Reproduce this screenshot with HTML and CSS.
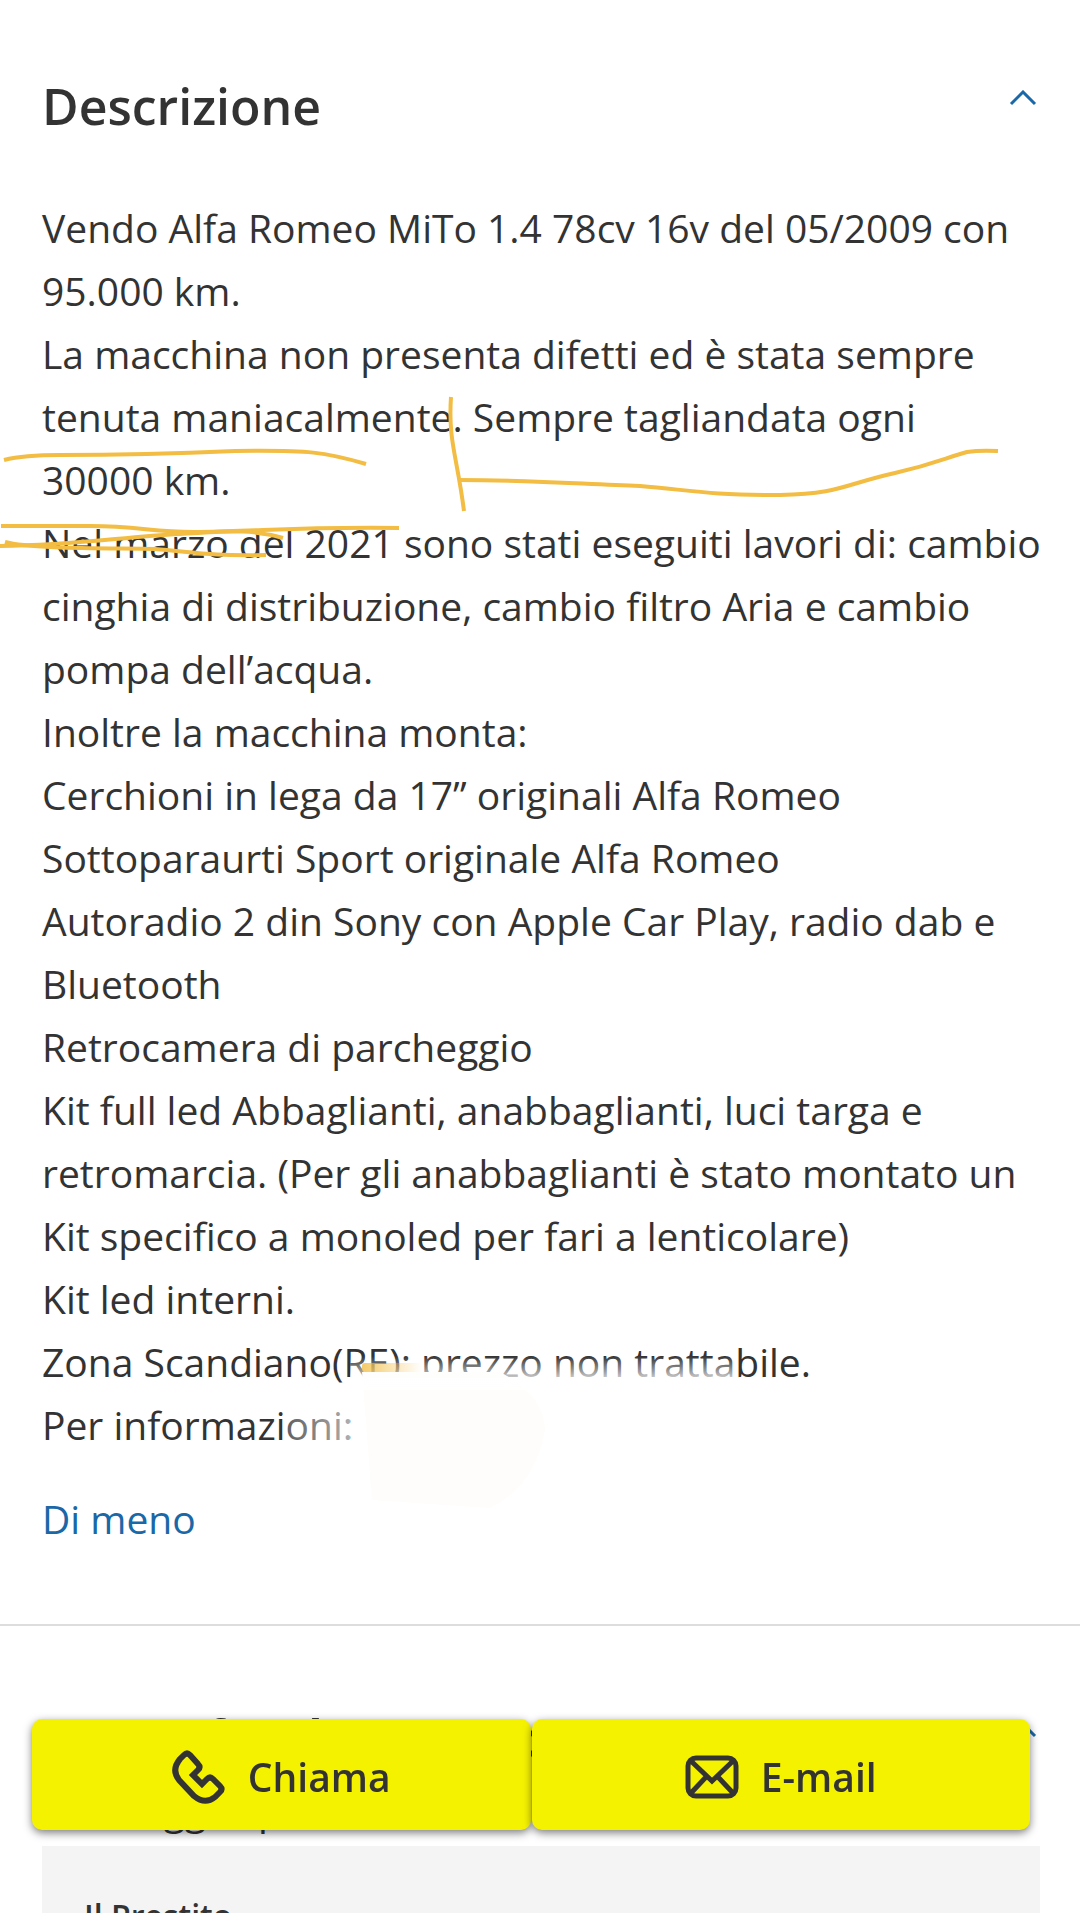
FILE: index.html
```
<!DOCTYPE html>
<html lang="it">

<head>
  <meta charset="UTF-8">
  <meta name="viewport" content="width=device-width, initial-scale=1">
  <title>Alfa Romeo MiTo</title>
  <link rel="stylesheet" href="styles.css">
</head>

<body>
  <main>
    <section class="section">
      <div class="section-head">
        <h2>Descrizione</h2>
        <button type="button" class="toggle" aria-label="Chiudi descrizione">
          <svg viewBox="0 0 28 16"><path d="M2 14 14 2l12 12" /></svg>
        </button>
      </div>
      <div class="text">
        <p>Vendo Alfa Romeo MiTo 1.4 78cv 16v del 05/2009 con<br> 95.000 km.</p>
        <p>La macchina non presenta difetti ed è stata sempre<br> tenuta maniacalmente. Sempre tagliandata ogni<br> 30000 km.</p>
        <p>Nel marzo del 2021 sono stati eseguiti lavori di: cambio<br> cinghia di distribuzione, cambio filtro Aria e cambio<br> pompa dell’acqua.</p>
        <p>Inoltre la macchina monta:</p>
        <p>Cerchioni in lega da 17” originali Alfa Romeo</p>
        <p>Sottoparaurti Sport originale Alfa Romeo</p>
        <p>Autoradio 2 din Sony con Apple Car Play, radio dab e<br> Bluetooth</p>
        <p>Retrocamera di parcheggio</p>
        <p>Kit full led Abbaglianti, anabbaglianti, luci targa e<br> retromarcia. (Per gli anabbaglianti è stato montato un<br> Kit specifico a monoled per fari a lenticolare)</p>
        <p>Kit led interni.</p>
        <p>Zona Scandiano(RE): prezzo non trattabile.</p>
        <p>Per informazioni:</p>

        <!-- segni a penna sopra il testo -->
        <svg class="marks" viewBox="0 0 1080 1400" aria-hidden="true">
          <defs>
            <linearGradient id="fadeDown" x1="0" y1="0" x2="0" y2="1">
              <stop offset="0" stop-color="#fff" stop-opacity="0" />
              <stop offset="0.7" stop-color="#fff" stop-opacity="0.8" />
              <stop offset="1" stop-color="#fff" />
            </linearGradient>
            <linearGradient id="fadeRight">
              <stop offset="0" stop-color="#fff" stop-opacity="0.2" />
              <stop offset="1" stop-color="#fff" stop-opacity="0.6" />
            </linearGradient>
            <linearGradient id="ink">
              <stop offset="0" stop-color="#f2bd42" stop-opacity="0.8" />
              <stop offset="1" stop-color="#f2bd42" stop-opacity="0" />
            </linearGradient>
          </defs>
          <path class="pen" d="M4 264C20 260 34 259 60 259C130 259 190 257 235 255C310 254 325 256 366 268" />
          <path class="pen" d="M451 201C448 245 457 260 464 315" />
          <path class="pen" d="M459 284C530 284 580 288 640 290C690 294 705 299 780 299C840 298 845 288 895 277C935 268 945 262 967 256Q980 254 998 255" />
          <path class="pen" d="M1 330H90C140 330 155 337 200 336C280 334 300 331 399 332" />
          <path class="pen" d="M0 350C80 349 120 341 180 338C220 336 250 332 283 342" />
          <path class="pen" d="M5 346C30 353 110 352 155 353C200 357 210 360 266 359" />
          <path class="smudge" d="M362 1176H500Q545 1200 545 1235Q535 1290 490 1312L372 1304z" />
          <rect fill="url(#fadeDown)" x="350" y="1160" width="388" height="34" />
          <rect fill="url(#fadeRight)" x="282" y="1200" width="68" height="56" />
          <rect fill="url(#ink)" x="362" y="1167" width="60" height="9" rx="3" />
        </svg>
      </div>
      <a class="less" href="#">Di meno</a>
    </section>

    <section class="section finance">
      <div class="section-head">
        <h2>Rate e finirà con uno in corso</h2>
        <button type="button" class="toggle" aria-label="Chiudi prestito">
          <svg viewBox="0 0 28 16"><path d="M2 14 14 2l12 12" /></svg>
        </button>
      </div>
      <p>I vantaggi e prezzo</p>
      <div class="card">
        <h3>Il Prestito</h3>
      </div>
    </section>
  </main>

  <div class="contact">
    <button type="button">
      <svg viewBox="0 0 54 54">
        <path d="M12 5 8 9Q-1 20 7 30L22 46Q33 55 43 47L48 42Q51 39 48 36L41 29Q38 26 35 29L30 34 21 25 26 20Q29 17 26 14L18 5Q15 2 12 5z" />
      </svg>
      Chiama
    </button>
    <button type="button">
      <svg class="mail" viewBox="0 0 54 44">
        <rect x="3" y="3" width="48" height="38" rx="8" />
        <path d="M6 6 27 26 48 6M6 38 21 22M48 38 33 22" />
      </svg>
      E-mail
    </button>
  </div>
</body>

</html>
```
FILE: styles.css
```
* {
  box-sizing: border-box;
}

body,
h2,
h3,
p {
  margin: 0;
}

body {
  height: 100vh;
  overflow: hidden;
  font: 39px/63px "Open Sans", Lato, sans-serif;
  color: #333;
  background: #fff;
}

button {
  padding: 0;
  border: 0;
  background: none;
  font: inherit;
  color: inherit;
  cursor: pointer;
}

svg {
  fill: none;
  stroke: currentColor;
}

.section {
  padding: 74px 40px 74px 42px;
  border-bottom: 2px solid #ddd;
}

.section-head {
  display: flex;
  justify-content: space-between;
  align-items: flex-start;
  margin-bottom: 58px;
}

h2 {
  font-size: 50px;
  line-height: 64px;
  font-weight: 600;
}

.toggle {
  display: flex;
  padding: 16px 3px;
  color: #1a68a8;
}

.toggle svg {
  width: 28px;
  height: 16px;
  stroke-width: 3;
}

.text {
  position: relative;
  margin-right: -20px;
}

/* il foglio dei segni parte dal bordo sinistro della pagina */
.marks {
  position: absolute;
  left: -42px;
  top: 0;
  width: 1080px;
  height: 1400px;
  stroke: none;
  pointer-events: none;
}

.pen {
  stroke: #f2bd42;
  stroke-width: 4;
}

.smudge {
  fill: #fefdfb;
}

.less {
  display: block;
  margin-top: 31px;
  color: #1a68a8;
  text-decoration: none;
}

.finance {
  padding-top: 80px;
  padding-bottom: 0;
  border: 0;
}

.finance .section-head {
  margin-bottom: 8px;
}

.card {
  margin-top: 5px;
  padding: 38px 42px;
  background: #f4f4f4;
}

h3 {
  font-size: 32px;
  font-weight: 600;
}

.contact {
  position: fixed;
  left: 32px;
  right: 50px;
  bottom: 83px;
  display: flex;
  gap: 1px;
}

.contact button {
  flex: 1;
  display: flex;
  align-items: center;
  justify-content: center;
  gap: 22px;
  height: 111px;
  padding-top: 4px;
  border-radius: 10px;
  background: #f5f200;
  box-shadow: 0 3px 8px rgba(0, 0, 0, 0.5);
  font-size: 39px;
  font-weight: 600;
}

.contact svg {
  width: 54px;
  height: 54px;
  stroke-width: 6;
}

.contact .mail {
  height: 44px;
  stroke-width: 5;
}
```
